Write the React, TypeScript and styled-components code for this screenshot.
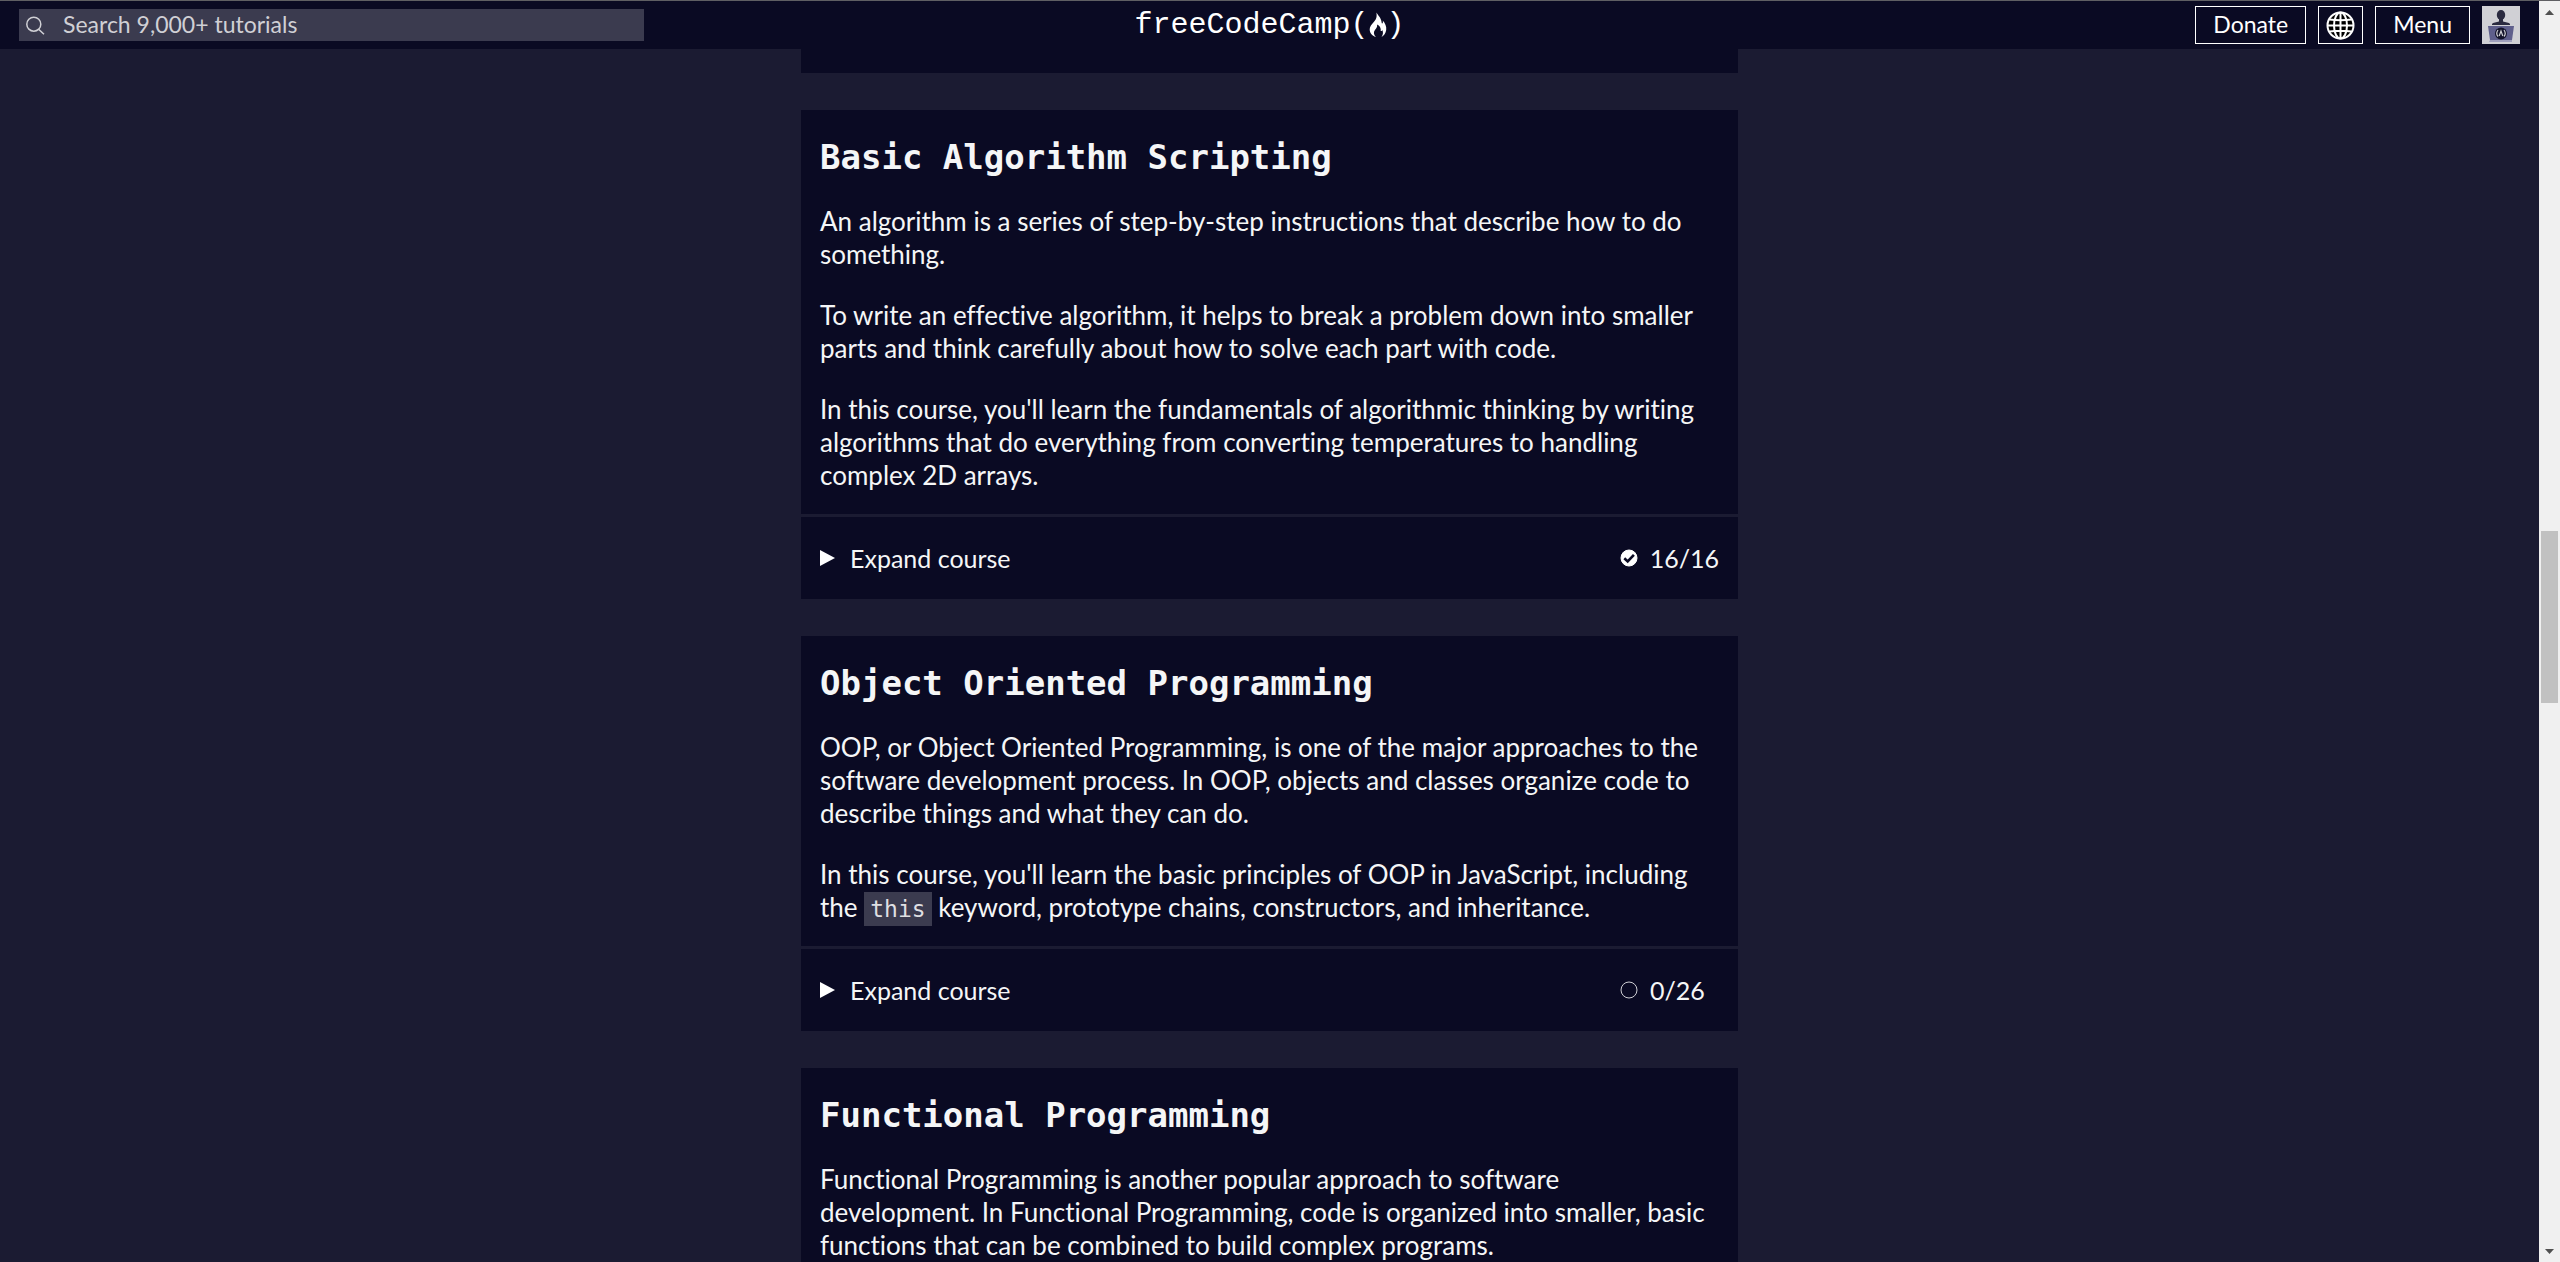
import React from 'react';
import styled, { createGlobalStyle } from 'styled-components';

const GlobalStyle = createGlobalStyle`
  *, *::before, *::after { box-sizing: border-box; }
  body {
    margin: 0;
    background: #1b1b32;
    color: #f5f6f7;
    font-family: Lato, sans-serif;
    font-size: 26px;
    line-height: 33px;
    font-variant-ligatures: none;
  }
  svg { flex: none; }
`;

const Shell = styled.div`
  display: flex;
  height: 100vh;
  border-top: 1px solid #5f5f63;
  overflow: hidden;
`;

const Page = styled.div`
  flex: 1;
  min-width: 0;
  display: flex;
  flex-direction: column;
`;

const Header = styled.header`
  display: grid;
  grid-template-columns: 1fr auto 1fr;
  align-items: center;
  flex: none;
  height: 48px;
  padding: 0 19px;
  background: #0a0a23;
`;

const SearchBox = styled.label`
  display: flex;
  align-items: center;
  gap: 18px;
  width: 100%;
  max-width: 625px;
  height: 32px;
  padding: 0 7px;
  background: #3b3b4f;
  color: #d0d0d5;
`;

const SearchInput = styled.input`
  flex: 1;
  min-width: 0;
  padding: 0 0 2px;
  border: 0;
  outline: 0;
  background: transparent;
  color: inherit;
  font-family: inherit;
  font-size: 23px;
  line-height: 30px;
  &::placeholder { color: #d0d0d5; opacity: 1; }
`;

const Logo = styled.a`
  display: flex;
  align-items: center;
  color: #ffffff;
  font-family: "Liberation Mono", monospace;
  font-size: 30px;
  line-height: 48px;
  text-decoration: none;
`;

const Actions = styled.div`
  display: flex;
  align-items: center;
  justify-content: flex-end;
  gap: 12px;
`;

const NavButton = styled.button<{ $compact?: boolean }>`
  display: flex;
  align-items: center;
  height: 38px;
  padding: ${(p) => (p.$compact ? '0 7px' : '0 17px 2px')};
  border: 1px solid #ffffff;
  background: #0a0a23;
  color: #ffffff;
  font-family: inherit;
  font-size: 23px;
  line-height: 34px;
`;

const AvatarLink = styled.a`
  display: block;
  width: 38px;
  height: 38px;
  background: #d0d0d5;
`;

const Main = styled.main`
  display: flex;
  flex-direction: column;
  align-items: center;
  gap: 37px;
  flex: 1;
  min-height: 0;
  overflow: hidden;
`;

const Card = styled.section`
  flex: none;
  width: 100%;
  max-width: 937px;
  background: #0a0a23;
`;

const CardTail = styled(Card)`
  height: 24px;
`;

const Intro = styled.div`
  display: flex;
  flex-direction: column;
  gap: 28px;
  padding: 27px 19px 22px;
`;

const Title = styled.h2`
  margin: 0;
  font-family: "DejaVu Sans Mono", monospace;
  font-size: 34px;
  font-weight: 700;
  line-height: 40px;
`;

const Text = styled.p`
  margin: 0;
`;

const Code = styled.code`
  padding: 4px 6px;
  background: #3b3b4f;
  color: #dfdfe2;
  font-family: "DejaVu Sans Mono", monospace;
  font-size: 23px;
  line-height: 1;
`;

const ExpandButton = styled.button`
  display: flex;
  align-items: center;
  width: 100%;
  height: 85px;
  padding: 0 19px;
  border: 0;
  border-top: 3px solid #1b1b32;
  background: transparent;
  color: inherit;
  font-family: inherit;
  font-size: 25px;
  line-height: 33px;
  font-variant-ligatures: none;
  text-align: left;
`;

const ExpandLabel = styled.span`
  flex: 1;
  padding-left: 15px;
`;

const Progress = styled.span`
  display: flex;
  align-items: center;
  gap: 12px;
  min-width: 99px;
`;

const Scrollbar = styled.div`
  display: flex;
  flex-direction: column;
  align-items: center;
  flex: none;
  width: 21px;
  background: #f0f0f0;
`;

const Track = styled.div`
  display: grid;
  grid-template-rows: 509fr 171fr 538fr;
  flex: 1;
  width: 17px;
`;

const Thumb = styled.div`
  grid-row: 2;
  background: #c1c1c1;
`;

const SearchIcon = () => (
  <svg width="19" height="19" viewBox="0 0 19 19" fill="none" stroke="#d0d0d5" strokeWidth="1.5" aria-hidden="true">
    <circle cx="7.8" cy="8.2" r="7" />
    <path d="M12.6 13.2 18 18.2" />
  </svg>
);

const Flame = () => (
  <svg width="18" height="26" viewBox="0 0 18 26" fill="#ffffff" aria-hidden="true">
    <path d="M7.4 0.6C8.8 3 12.4 6.6 12.6 10.2c0.1 1.6 0.9 1.5 1.3 0.2 0.1-0.6 0-1.3-0.2-1.9 2.4 2.6 4 6 3.5 9.4-0.5 3.2-2.2 5.6-4.7 7.2 1.6-2.4 1.9-5 0.8-7.2-0.3 0.9-0.9 1.3-1.6 1.2 0.5-2.9-1.1-5.3-3.6-6.5 0.4 2.6-0.8 3.8-2 5.2-1.8 2.2-1.6 4.9 0.8 7.3C3 23.7 0.6 20.7 0.7 17.2 0.9 12 7.5 9.5 7.6 4.2 7.7 3 7.6 1.8 7.4 0.6Z" />
  </svg>
);

const Globe = () => (
  <svg width="29" height="29" viewBox="0 0 29 29" fill="none" stroke="#ffffff" strokeWidth="2" aria-hidden="true">
    <circle cx="14.5" cy="14.5" r="13" fill="#000000" />
    <ellipse cx="14.5" cy="14.5" rx="6.5" ry="13" />
    <path d="M14.5 1.5v26M1.5 14.5h26M3.5 8.5q11 1.6 22 0M3.5 20.5q11-1.6 22 0" />
  </svg>
);

const Avatar = () => (
  <svg width="38" height="38" viewBox="0 0 38 38" role="img" aria-label="Profile">
    <ellipse cx="19" cy="9" rx="4.2" ry="5" fill="#2a2a40" />
    <path d="M17 12h4v3.5l6 1.5q1.5 1 1 2H10q-0.5-1 1-2l6-1.5Z" fill="#2a2a40" />
    <path d="M6 20h26l-2 14H8Z" fill="#5f5f8c" />
    <path d="M8 34h22v2H7Z" fill="#a0a0bd" />
    <circle cx="19" cy="27.5" r="6" fill="#14142b" />
    <path d="M16 24q-2.5 3.5 0 6.5M22 24q2.5 3.5 0 6.5M17.2 30l1.8-5 1.8 5" fill="none" stroke="#d0d0d5" strokeWidth="1.2" />
  </svg>
);

const Caret = () => (
  <svg width="15" height="16" viewBox="0 0 15 16" fill="#ffffff" aria-hidden="true">
    <path d="M0 0 15 8 0 16Z" />
  </svg>
);

const Status = ({ done }: { done: boolean }) => (
  <svg width="18" height="18" viewBox="0 0 18 18" fill="none" aria-hidden="true">
    <circle cx="9" cy="9" r="8" stroke={done ? '#ffffff' : '#d0d0d5'} fill={done ? '#ffffff' : 'none'} />
    {done && <path d="M4.3 9.3 7.7 12.5 13.9 5.9" stroke="#0a0a23" strokeWidth="2.6" />}
  </svg>
);

const Arrow = ({ down }: { down?: boolean }) => (
  <svg width="21" height="21" viewBox="0 0 21 21" fill="#505050" aria-hidden="true">
    <path d={down ? 'M6 8h9l-4.5 5Z' : 'M6 14h9l-4.5-5Z'} />
  </svg>
);

type Course = { title: string; text: React.ReactNode[]; done: number; total: number };

const courses: Course[] = [
  {
    title: 'Basic Algorithm Scripting',
    text: [
      'An algorithm is a series of step-by-step instructions that describe how to do something.',
      'To write an effective algorithm, it helps to break a problem down into smaller parts and think carefully about how to solve each part with code.',
      "In this course, you'll learn the fundamentals of algorithmic thinking by writing algorithms that do everything from converting temperatures to handling complex 2D arrays.",
    ],
    done: 16,
    total: 16,
  },
  {
    title: 'Object Oriented Programming',
    text: [
      'OOP, or Object Oriented Programming, is one of the major approaches to the software development process. In OOP, objects and classes organize code to describe things and what they can do.',
      <>
        In this course, you'll learn the basic principles of OOP in JavaScript, including the <Code>this</Code> keyword,
        prototype chains, constructors, and inheritance.
      </>,
    ],
    done: 0,
    total: 26,
  },
  {
    title: 'Functional Programming',
    text: [
      'Functional Programming is another popular approach to software development. In Functional Programming, code is organized into smaller, basic functions that can be combined to build complex programs.',
    ],
    done: 0,
    total: 24,
  },
];

const CourseCard = ({ course }: { course: Course }) => (
  <Card>
    <Intro>
      <Title>{course.title}</Title>
      {course.text.map((paragraph, i) => (
        <Text key={i}>{paragraph}</Text>
      ))}
    </Intro>
    <ExpandButton type="button" aria-expanded="false">
      <Caret />
      <ExpandLabel>Expand course</ExpandLabel>
      <Progress>
        <Status done={course.done === course.total} />
        {`${course.done}/${course.total}`}
      </Progress>
    </ExpandButton>
  </Card>
);

export default function App() {
  return (
    <>
      <GlobalStyle />
      <Shell>
        <Page>
          <Header>
            <SearchBox>
              <SearchIcon />
              <SearchInput type="search" placeholder="Search 9,000+ tutorials" aria-label="Search" />
            </SearchBox>
            <Logo href="#">
              freeCodeCamp(
              <Flame />)
            </Logo>
            <Actions>
              <NavButton type="button">Donate</NavButton>
              <NavButton type="button" $compact aria-label="Language">
                <Globe />
              </NavButton>
              <NavButton type="button">Menu</NavButton>
              <AvatarLink href="#">
                <Avatar />
              </AvatarLink>
            </Actions>
          </Header>
          <Main>
            <CardTail />
            {courses.map((course) => (
              <CourseCard key={course.title} course={course} />
            ))}
          </Main>
        </Page>
        <Scrollbar aria-hidden="true">
          <Arrow />
          <Track>
            <Thumb />
          </Track>
          <Arrow down />
        </Scrollbar>
      </Shell>
    </>
  );
}
